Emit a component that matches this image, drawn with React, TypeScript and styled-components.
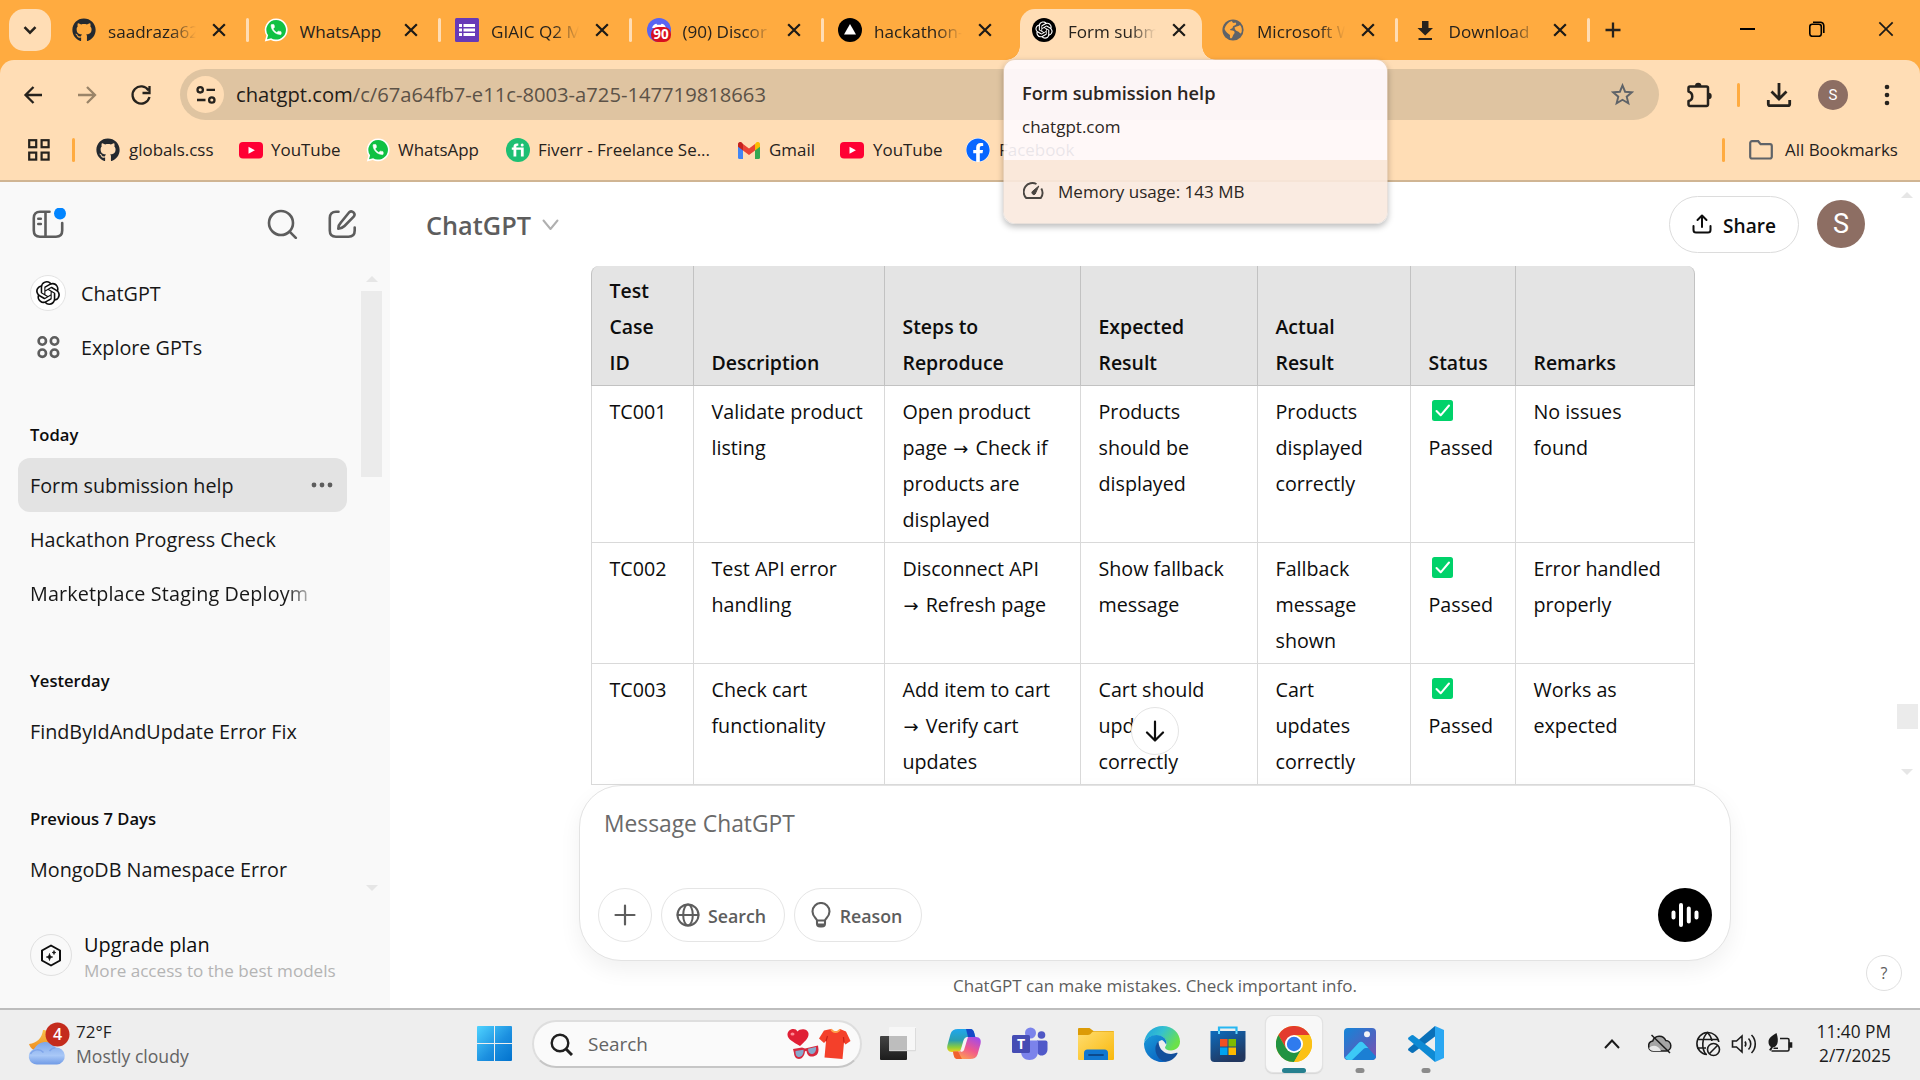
import React from 'react';
import styled, { createGlobalStyle, css } from 'styled-components';
import { FaGithub, FaFacebook } from 'react-icons/fa';

const Global = createGlobalStyle`
  * { box-sizing: border-box; }
  html, body { margin: 0; padding: 0; overflow: hidden; background: #fff; }
  body { font-family: "Open Sans", "Noto Sans", sans-serif; color: #0d0d0d; }
  svg { display: block; flex: none; }
`;

const Screen = styled.div`
  width: 1920px;
  height: 1080px;
  display: flex;
  flex-direction: column;
  position: relative;
  overflow: hidden;
`;

/* ---------- tab strip ---------- */
const TabStrip = styled.div`
  height: 60px;
  flex: none;
  display: flex;
  align-items: flex-start;
  background: #ffab40;
  padding: 9px 0 0 9px;
`;
const TabSearch = styled.div`
  width: 42px;
  height: 42px;
  border-radius: 15px;
  background: #ffddb5;
  display: flex;
  align-items: center;
  justify-content: center;
  margin-right: 9px;
`;
const TabBox = styled.div<{ $active?: boolean }>`
  width: 191.5px;
  height: 51px;
  padding-left: 12px;
  padding-bottom: 9px;
  display: flex;
  align-items: center;
  position: relative;
  ${p => p.$active && css`
    width: 182px;
    margin: 0 7px 0 2.5px;
    border-radius: 15px 15px 0 0;
    background: #ffddb5;
    &::before, &::after {
      content: "";
      position: absolute;
      bottom: 0;
      width: 14px;
      height: 14px;
    }
    &::before { left: -14px; background: radial-gradient(circle at 0 0, transparent 13.5px, #ffddb5 14px); }
    &::after { right: -14px; background: radial-gradient(circle at 100% 0, transparent 13.5px, #ffddb5 14px); }
  `}
`;
const TabTitle = styled.span<{ $full?: boolean }>`
  width: 88px;
  margin: 3px 11px 0 12px;
  font-size: 17.1px;
  line-height: 24px;
  white-space: nowrap;
  overflow: hidden;
  color: #26221d;
  ${p => !p.$full && css`
    -webkit-mask-image: linear-gradient(90deg, #000 62px, transparent 88px);
    mask-image: linear-gradient(90deg, #000 62px, transparent 88px);
  `}
`;
const CloseSlot = styled.div`
  width: 24px;
  display: flex;
  justify-content: center;
`;
const TabSeparator = styled.div`
  width: 3px;
  height: 24px;
  border-radius: 2px;
  margin-left: 15px;
  background: #ffddb5;
`;
const NewTab = styled.div`
  width: 24px;
  height: 42px;
  margin-left: 9px;
  display: flex;
  align-items: center;
  justify-content: center;
`;
const WindowControls = styled.div`
  margin-left: auto;
  display: flex;
  height: 40px;
`;
const WindowButton = styled.div`
  width: 69px;
  display: flex;
  align-items: center;
  justify-content: center;
`;

/* ---------- toolbar ---------- */
const Chrome = styled.div`
  height: 122px;
  flex: none;
  background: linear-gradient(#ffab40, #ffab40) top / 100% 16px no-repeat;
`;
const ChromeInner = styled.div`
  height: 122px;
  background: #ffddb5;
  border-radius: 14px 14px 0 0;
  border-bottom: 2px solid #d0b593;
`;
const Toolbar = styled.div`
  height: 60px;
  padding: 9px 0 0 19px;
  display: flex;
  align-items: flex-start;
`;
const NavButton = styled.div<{ $w: number; $center?: boolean; $ml?: number }>`
  width: ${p => p.$w}px;
  height: 51px;
  margin-left: ${p => p.$ml ?? 0}px;
  display: flex;
  align-items: center;
  justify-content: ${p => (p.$center ? 'center' : 'flex-start')};
`;
const Omnibox = styled.div`
  width: 1479px;
  height: 51px;
  border-radius: 26px;
  background: #dfc4a1;
  display: flex;
  align-items: center;
  padding: 0 25px 0 7px;
`;
const SiteInfo = styled.div`
  width: 37px;
  height: 37px;
  border-radius: 50%;
  background: #ffddb5;
  display: flex;
  align-items: center;
  justify-content: center;
`;
const Url = styled.div`
  margin: 0 auto 1px 12px;
  font-size: 20.2px;
  color: #5c5247;
  white-space: nowrap;
  b { font-weight: 400; color: #1f1c18; }
`;
const Avatar = styled.div<{ $size: number; $font: number }>`
  width: ${p => p.$size}px;
  height: ${p => p.$size}px;
  border-radius: 50%;
  background: #8d6e63;
  color: #fff;
  font-family: Roboto, sans-serif;
  font-size: ${p => p.$font}px;
  display: flex;
  align-items: center;
  justify-content: center;
  flex: none;
`;
const BarSlot = styled.div`
  height: 51px;
  display: flex;
  align-items: center;
`;
const OrangeBar = styled.div`
  width: 3px;
  height: 24px;
  border-radius: 2px;
  background: #ffab40;
  flex: none;
`;
const BookmarkBar = styled.div`
  height: 60px;
  display: flex;
  align-items: center;
  padding: 0 22px 0 28px;
`;
const BookmarkGroup = styled.div<{ $right?: boolean }>`
  display: flex;
  margin-left: ${p => (p.$right ? '24px' : '21px')};
  margin-right: ${p => (p.$right ? '0' : 'auto')};
`;
const Bookmark = styled.div<{ $w: number; $gap?: number }>`
  width: ${p => p.$w}px;
  display: flex;
  align-items: center;
  gap: ${p => p.$gap ?? 9}px;
  font-size: 16.95px;
  white-space: nowrap;
  color: #26221d;
  > label { padding-bottom: 1px; }
`;
const BlueF = styled.span`
  width: 24px;
  height: 24px;
  border-radius: 50%;
  background: #fff;
`;

/* ---------- tab hover card ---------- */
const HoverCard = styled.div`
  position: absolute;
  left: 1003px;
  top: 59px;
  width: 385px;
  height: 165px;
  border-radius: 12px;
  overflow: hidden;
  border: 1px solid rgba(214, 196, 186, 0.55);
  box-shadow: 0 3px 6px rgba(0, 0, 0, 0.26);
  font-size: 17.05px;
  color: #2b2622;
`;
const CardTop = styled.div`
  height: 100px;
  padding: 16px 18px 0;
  background: rgba(255, 251, 255, 0.9);
  line-height: 34px;
`;
const CardTitle = styled.div`
  font-size: 18.2px;
  font-weight: 600;
`;
const CardBottom = styled.div`
  height: 64px;
  padding: 0 19px 2px;
  background: rgba(249, 233, 222, 0.9);
  display: flex;
  align-items: center;
  gap: 14px;
`;

/* ---------- page ---------- */
const Page = styled.div`
  flex: 1;
  display: flex;
  min-height: 0;
`;
const Sidebar = styled.aside`
  width: 390px;
  background: #f9f9f9;
  display: flex;
  flex-direction: column;
`;
const SidebarTop = styled.div`
  height: 84px;
  flex: none;
  padding: 26px 33px 0 30px;
  display: flex;
  gap: 29px;
  > :first-child { margin-right: auto; }
`;
const SidebarScroll = styled.div`
  height: 631px;
  flex: none;
  display: flex;
`;
const SidebarList = styled.div`
  width: 361px;
  padding-left: 18px;
  display: flex;
  flex-direction: column;
`;
const SideRow = styled.div<{ $active?: boolean }>`
  width: 329px;
  height: 54px;
  flex: none;
  border-radius: 12px;
  padding: 0 14px 0 12px;
  display: flex;
  align-items: center;
  background: ${p => (p.$active ? '#e3e3e3' : 'transparent')};
  font-size: 19.75px;
  white-space: nowrap;
  color: #171717;
`;
const SideText = styled.span<{ $fade?: boolean }>`
  padding-top: 1px;
  margin-right: auto;
  ${p => p.$fade && css`
    letter-spacing: 0.15px;
    -webkit-mask-image: linear-gradient(90deg, #000 256px, transparent 288px);
    mask-image: linear-gradient(90deg, #000 256px, transparent 288px);
  `}
`;
const SideIcon = styled.div<{ $ring?: boolean }>`
  width: 36px;
  height: 36px;
  margin-right: 15px;
  border-radius: 50%;
  border: ${p => (p.$ring ? '1px solid #e3e3e3' : '1px solid transparent')};
  background: ${p => (p.$ring ? '#fff' : 'transparent')};
  display: flex;
  align-items: center;
  justify-content: center;
`;
const GroupLabel = styled.div`
  height: 84px;
  flex: none;
  padding: 47px 12px 0;
  font-size: 16.6px;
  font-weight: 600;
  line-height: 28px;
  color: #0d0d0d;
`;
const ScrollTrack = styled.div<{ $w: number }>`
  width: ${p => p.$w}px;
  display: flex;
  flex-direction: column;
  align-items: center;
`;
const Arrow = styled.div<{ $down?: boolean; $top: number }>`
  margin-top: ${p => p.$top}px;
  border: 6px solid transparent;
  border-top: ${p => (p.$down ? '6px solid #e6e6e6' : '0')};
  border-bottom: ${p => (p.$down ? '0' : '6px solid #e6e6e6')};
`;
const Thumb = styled.div<{ $h: number; $top: number }>`
  width: 21px;
  height: ${p => p.$h}px;
  margin-top: ${p => p.$top}px;
  background: #ebebeb;
`;
const Upgrade = styled.div`
  display: flex;
  padding: 36px 0 0 30px;
`;
const UpgradeIcon = styled.div`
  width: 42px;
  height: 42px;
  border-radius: 50%;
  border: 1px solid #e0e0e0;
  margin: 1px 12px 0 0;
  display: flex;
  align-items: center;
  justify-content: center;
`;
const UpgradeText = styled.div`
  font-size: 19.9px;
  line-height: 26px;
  margin-top: -1px;
  small { display: block; font-size: 17.1px; color: #b4b4b4; }
`;

const Main = styled.main`
  width: 1506px;
  display: flex;
  flex-direction: column;
`;
const MainHeader = styled.header`
  height: 84px;
  flex: none;
  display: flex;
  align-items: center;
  padding: 0 31px 0 36px;
`;
const ModelName = styled.div`
  margin-right: auto;
  padding-top: 2px;
  display: flex;
  align-items: center;
  gap: 11px;
  font-size: 25.3px;
  font-weight: 600;
  color: #5d5d5d;
`;
const ShareButton = styled.div`
  width: 130px;
  height: 57px;
  border: 1px solid #dcdcdc;
  border-radius: 29px;
  display: flex;
  align-items: center;
  justify-content: center;
  gap: 11px;
  font-size: 19.1px;
  font-weight: 600;
  margin-right: 18px;
  span { padding-top: 3px; }
`;
const TableArea = styled.div`
  height: 519px;
  flex: none;
  padding-left: 201px;
  overflow: hidden;
  position: relative;
`;
const Table = styled.table`
  width: 1104px;
  table-layout: fixed;
  border-collapse: separate;
  border-spacing: 0;
  font-size: 19.7px;
  line-height: 36px;
  color: #0d0d0d;
  th, td {
    text-align: left;
    padding: 8px 4px 4px 17.5px;
    border-left: 1px solid #d9d9d9;
    border-bottom: 1px solid #d9d9d9;
    white-space: pre;
  }
  th {
    vertical-align: bottom;
    font-weight: 600;
    font-size: 19.45px;
    padding-top: 7px;
    background: #e4e4e4;
    border-color: #c2c2c2;
  }
  td { vertical-align: top; }
  th:last-child { border-right: 1px solid #c2c2c2; border-top-right-radius: 8px; }
  th:first-child { border-top-left-radius: 8px; }
  td:last-child { border-right: 1px solid #d9d9d9; }
`;
const Col = styled.col<{ $w: number }>`
  width: ${p => p.$w}px;
`;
const CheckEmoji = styled.span`
  width: 28px;
  height: 36px;
  padding-bottom: 3px;
  display: flex;
  align-items: center;
  justify-content: center;
`;
const LongArrow = styled.span`
  line-height: 20px;
  font-family: "DejaVu Sans", sans-serif;
  font-size: 18px;
  padding: 0 2px 0 1px;
`;
const ScrollDown = styled.div`
  position: absolute;
  left: 741px;
  top: 441px;
  width: 48px;
  height: 48px;
  border-radius: 50%;
  background: #fff;
  border: 1px solid #e4e4e4;
  display: flex;
  align-items: center;
  justify-content: center;
`;
const Composer = styled.div`
  width: 1152px;
  height: 176px;
  flex: none;
  margin-left: 189px;
  border: 1px solid #e3e3e3;
  border-radius: 42px;
  background: #fff;
  box-shadow: 0 9px 22px rgba(0, 0, 0, 0.06);
  padding: 20px 18px 18px;
  display: flex;
  flex-direction: column;
  justify-content: space-between;
`;
const Placeholder = styled.div`
  padding-left: 6px;
  font-size: 22.8px;
  line-height: 36px;
  color: #6a6a6a;
`;
const ComposerRow = styled.div`
  display: flex;
  gap: 9px;
  > :last-child { margin-left: auto; }
`;
const Pill = styled.div<{ $w: number }>`
  width: ${p => p.$w}px;
  height: 54px;
  border: 1px solid #e5e5e5;
  border-radius: 27px;
  display: flex;
  align-items: center;
  justify-content: center;
  gap: 8px;
  font-size: 17.8px;
  font-weight: 600;
  color: #5d5d5d;
  span { padding: 1px 4px 0 0; }
`;
const VoiceButton = styled.div`
  width: 54px;
  height: 54px;
  border-radius: 50%;
  background: #000;
  display: flex;
  align-items: center;
  justify-content: center;
`;
const Disclaimer = styled.div`
  width: 1152px;
  margin-left: 189px;
  line-height: 46px;
  padding-top: 2px;
  text-align: center;
  font-size: 17px;
  color: #5d5d5d;
  white-space: nowrap;
`;
const Help = styled.div`
  position: absolute;
  left: 1866px;
  top: 955px;
  width: 36px;
  height: 36px;
  border-radius: 50%;
  border: 1px solid #e0e0e0;
  font-size: 16px;
  color: #5d5d5d;
  display: flex;
  align-items: center;
  justify-content: center;
`;

/* ---------- taskbar ---------- */
const Taskbar = styled.footer`
  height: 72px;
  flex: none;
  background: #eee;
  border-top: 2px solid #bdbdbd;
  display: flex;
  align-items: center;
  padding: 0 30px 2px 26px;
`;
const Weather = styled.div`
  width: 451px;
  display: flex;
  align-items: center;
  font-size: 17px;
  line-height: 24px;
  color: #1f1f1f;
  div { margin: 0 0 0 2px; }
  small { display: block; font-size: 17.6px; color: #636363; }
`;
const SearchBox = styled.div`
  width: 330px;
  height: 48px;
  margin: 0 3px 0 19px;
  border-radius: 24px;
  border: 2px solid #dedede;
  border-bottom-color: #c6c6c6;
  background: #fafafa;
  display: flex;
  align-items: center;
  padding: 0 9px 0 16px;
  font-size: 18.95px;
  color: #636363;
  span { margin: 0 auto 0 15px; }
`;
const AppSlot = styled.div<{ $active?: boolean }>`
  width: ${p => (p.$active ? 56 : 66)}px;
  margin: 0 ${p => (p.$active ? 5 : 0)}px;
  height: 56px;
  border-radius: 7px;
  display: flex;
  flex-direction: column;
  align-items: center;
  justify-content: center;
  position: relative;
  ${p => p.$active && css`background: #f8f8f8; box-shadow: 0 0 0 1px #e3e3e3, 0 1px 1px 1px #d6d6d6;`}
`;
const Indicator = styled.div<{ $wide?: boolean }>`
  position: absolute;
  bottom: -1px;
  left: 50%;
  transform: translateX(-50%);
  width: ${p => (p.$wide ? 24 : 9)}px;
  height: 5px;
  border-radius: 3px;
  background: ${p => (p.$wide ? '#26808f' : '#8b8b8b')};
`;
const Tray = styled.div`
  margin-left: auto;
  display: flex;
  align-items: center;
`;
const TraySlot = styled.div<{ $w: number; $ml?: number }>`
  width: ${p => p.$w}px;
  margin-left: ${p => p.$ml ?? 0}px;
  display: flex;
  justify-content: center;
`;
const Clock = styled.div`
  width: 93px;
  margin-right: -1px;
  text-align: right;
  font-size: 17.3px;
  line-height: 24px;
  color: #1b1b1b;
  white-space: nowrap;
`;

/* ---------- icons ---------- */
const OPENAI = 'M22.2819 9.8211a5.9847 5.9847 0 0 0-.5157-4.9108 6.0462 6.0462 0 0 0-6.5098-2.9A6.0651 6.0651 0 0 0 4.9807 4.1818a5.9847 5.9847 0 0 0-3.9977 2.9 6.0462 6.0462 0 0 0 .7427 7.0966 5.98 5.98 0 0 0 .511 4.9107 6.051 6.051 0 0 0 6.5146 2.9001A5.9847 5.9847 0 0 0 13.2599 24a6.0557 6.0557 0 0 0 5.7718-4.2058 5.9894 5.9894 0 0 0 3.9977-2.9001 6.0557 6.0557 0 0 0-.7475-7.0729zm-9.022 12.6081a4.4755 4.4755 0 0 1-2.8764-1.0408l.1419-.0804 4.7783-2.7582a.7948.7948 0 0 0 .3927-.6813v-6.7369l2.02 1.1686a.071.071 0 0 1 .038.052v5.5826a4.504 4.504 0 0 1-4.4945 4.4944zm-9.6607-4.1254a4.4708 4.4708 0 0 1-.5346-3.0137l.142.0852 4.783 2.7582a.7712.7712 0 0 0 .7806 0l5.8428-3.3685v2.3324a.0804.0804 0 0 1-.0332.0615L9.74 19.9502a4.4992 4.4992 0 0 1-6.1408-1.6464zM2.3408 7.8956a4.485 4.485 0 0 1 2.3655-1.9728V11.6a.7664.7664 0 0 0 .3879.6765l5.8144 3.3543-2.0201 1.1685a.0757.0757 0 0 1-.071 0l-4.8303-2.7865A4.504 4.504 0 0 1 2.3408 7.872zm16.5963 3.8558L13.1038 8.364 15.1192 7.2a.0757.0757 0 0 1 .071 0l4.8303 2.7913a4.4944 4.4944 0 0 1-.6765 8.1042v-5.6772a.79.79 0 0 0-.407-.667zm2.0107-3.0231l-.142-.0852-4.7735-2.7818a.7759.7759 0 0 0-.7854 0L9.409 9.2297V6.8974a.0662.0662 0 0 1 .0284-.0615l4.8303-2.7866a4.4992 4.4992 0 0 1 6.6802 4.66zM8.3065 12.863l-2.02-1.1638a.0804.0804 0 0 1-.038-.0567V6.0742a4.4992 4.4992 0 0 1 7.3757-3.4537l-.142.0805L8.704 5.459a.7948.7948 0 0 0-.3927.6813zm1.0976-2.3654l2.602-1.4998 2.6069 1.4998v2.9994l-2.5974 1.4997-2.6067-1.4997Z';

const WhatsAppIcon = () => (
  <svg width="24" height="24" viewBox="0 0 24 24">
    <path d="M12.2 0.4A11.4 11.4 0 1 1 6.9 21.9L0.8 23.6 2.4 17.6A11.4 11.4 0 0 1 12.2 0.4Z" fill="#fff" />
    <path d="M12.2 2A9.8 9.8 0 1 1 7.1 20.2L3 21.3 4.1 17.3A9.8 9.8 0 0 1 12.2 2Z" fill="#10c143" />
    <path transform="translate(5.4 4.8) scale(.56)" d="M6.62 10.79c1.44 2.83 3.76 5.14 6.59 6.59l2.2-2.2c.27-.27.67-.36 1.02-.24 1.12.37 2.33.57 3.57.57.55 0 1 .45 1 1V20c0 .55-.45 1-1 1-9.39 0-17-7.61-17-17 0-.55.45-1 1-1h3.5c.55 0 1 .45 1 1 0 1.25.2 2.45.57 3.57.11.35.03.74-.25 1.02l-2.2 2.2z" fill="#fff" stroke="#fff" strokeWidth="1" />
  </svg>
);
const FormsIcon = () => (
  <svg width="24" height="24" viewBox="0 0 24 24">
    <rect width="24" height="24" rx="1.5" fill="#673ab7" />
    <g fill="#fff">
      <rect x="4" y="6" width="3" height="3" /><rect x="4" y="10.5" width="3" height="3" /><rect x="4" y="15" width="3" height="3" />
      <rect x="8.5" y="6" width="11.5" height="3" /><rect x="8.5" y="10.5" width="11.5" height="3" /><rect x="8.5" y="15" width="11.5" height="3" />
    </g>
  </svg>
);
const DiscordIcon = () => (
  <svg width="24" height="24" viewBox="0 0 24 24">
    <circle cx="12" cy="12" r="12" fill="#5865f2" />
    <path d="M5 10c1-3 3-4 4.500-4.200l.7 1h3.600l.7-1C16.500 6 18 7 19 10z" fill="#fff" />
    <rect x="4" y="9" width="20" height="15" rx="7" fill="#d8101f" />
    <text x="14" y="21.200" textAnchor="middle" fontFamily="Open Sans, sans-serif" fontWeight="700" fontSize="13.500" fill="#fff">90</text>
  </svg>
);
const VercelIcon = () => (
  <svg width="24" height="24" viewBox="0 0 24 24"><circle cx="12" cy="12" r="12" fill="#000" /><path d="M12 6l6 10.500H6z" fill="#fff" /></svg>
);
const GptTabIcon = () => (
  <svg width="24" height="24" viewBox="0 0 24 24"><circle cx="12" cy="12" r="12" fill="#000" /><path transform="translate(3.400 3.400) scale(.72)" d={OPENAI} fill="#fff" /></svg>
);
const GlobeIcon = () => (
  <svg width="24" height="24" viewBox="0 0 24 24">
    <circle cx="12" cy="12" r="10.600" fill="#5f6368" />
    <path d="M3.500 11c1-4 3.500-7 7.500-8 .5 2.500 2 2 3.500 1.500 1.500 1 .5 2.500-1 3-2 .5-1.500 1.500-2 2.500s-2.500.5-2.500 2c1.500.8 4 0 4.500 2 .5 1.500-1 2-1.500 3.500s-1 2.500-2 3c-1.500-.5-1-2.500-1-3.500-1.500-1-4.500-3-5.500-6z" fill="#ffab40" />
    <path d="M13.500 9.500c1.500-1.500 4.500-1 5.500-2.500 2 2 2.500 6 1 8.500-1.500 0-1.500-1.500-3-2s-3-1-3.500-4z" fill="#ffab40" />
  </svg>
);
const DownloadTabIcon = () => (
  <svg width="24" height="24" viewBox="0 0 24 24"><path d="M9 3h6.500v7h4.500l-7.800 7.500L4.500 10H9zM5.500 20h13.500v2H5.500z" fill="#26221d" /></svg>
);
const Cross = ({ s = 12, w = 2.2 }: { s?: number; w?: number }) => (
  <svg width={s} height={s} viewBox="0 0 12 12"><path d="M1 1l10 10M11 1L1 11" stroke="#1c1a17" strokeWidth={w * 12 / s} fill="none" /></svg>
);
const YouTubeIcon = () => (
  <svg width="24" height="24" viewBox="0 0 24 24"><rect y="4" width="24" height="16.500" rx="4" fill="#ff0033" /><path d="M9.500 8.700l6.400 3.500-6.400 3.500z" fill="#fff" /></svg>
);
const FiverrIcon = () => (
  <svg width="24" height="24" viewBox="0 0 24 24">
    <circle cx="12" cy="12" r="12" fill="#1dbf73" />
    <path d="M7.500 18.500v-6.800H5.800V9.500h1.700V8.700C7.500 6.700 8.800 5.500 10.800 5.500h1.500v2.300h-1c-.7 0-1 .3-1 .9v.8h7.400v9h-2.800v-6.800h-4.600v6.800z" fill="#fff" />
    <circle cx="16.200" cy="6.900" r="1.500" fill="#fff" />
  </svg>
);
const GmailIcon = () => (
  <svg width="22" height="17" viewBox="0 0 22 17">
    <path d="M0 3v12.500A1.500 1.500 0 0 0 1.500 17H5V6.500z" fill="#4285f4" /><path d="M22 3v12.500a1.500 1.500 0 0 1-1.500 1.500H17V6.500z" fill="#34a853" />
    <path d="M17 2v6.500l5-3.800V2.200C22 .2 19.700-.7 18.200.5z" fill="#fbbc04" /><path d="M5 8.500V2l6 4.500L17 2v6.500L11 13z" fill="#ea4335" /><path d="M0 2.200v2.500l5 3.800V2L3.800.5C2.300-.7 0 .2 0 2.200z" fill="#c5221f" />
  </svg>
);
const AppsIcon = () => (
  <svg width="22" height="22" viewBox="0 0 22 22" fill="none" stroke="#26221d" strokeWidth="2.200">
    <rect x="1.200" y="1.200" width="7" height="7" /><rect x="13.600" y="1.200" width="7" height="7" /><rect x="1.200" y="13.600" width="7" height="7" /><rect x="13.600" y="13.600" width="7" height="7" />
  </svg>
);
const FolderIcon = () => (
  <svg width="24" height="20" viewBox="0 0 24 20"><path d="M1.200 16.500V3A1.800 1.800 0 0 1 3 1.200h6.200l2.400 3H21A1.800 1.800 0 0 1 22.800 6v10.700A1.800 1.800 0 0 1 21 18.500H3a1.800 1.800 0 0 1-1.800-2z" fill="none" stroke="#5f6368" strokeWidth="2.200" /></svg>
);
const GaugeIcon = () => (
  <svg width="21" height="18" viewBox="0 0 21 18" fill="none" stroke="#4a4642" strokeWidth="1.900"><path d="M13.500 2A8.800 8.800 0 0 0 3.200 16h14.600A8.800 8.800 0 0 0 18.300 6.500" /><path d="M15.800 4L9.500 9.300a1.900 1.900 0 1 0 2.700 2.700z" fill="#4a4642" strokeWidth="1" /></svg>
);
const UpgradeLogo = () => (
  <svg width="24" height="27" viewBox="0 0 24 27" fill="none" stroke="#0d0d0d" strokeWidth="2" strokeLinejoin="round">
    <path d="M12 3.500l9 5v10l-9 5-9-5v-10z" />
    <path d="M10.500 11.500c.4 2.500 1 3 3.200 3.500-2.200.6-2.800 1.200-3.200 3.500-.4-2.300-1-2.900-3.200-3.500 2.200-.5 2.800-1 3.200-3.500zM15 8.500c.3 1.400.6 1.700 1.900 2-1.300.3-1.600.7-1.900 2-.3-1.300-.6-1.700-1.900-2 1.300-.3 1.600-.6 1.900-2z" fill="#0d0d0d" strokeWidth=".7" />
  </svg>
);
const CheckMark = () => (
  <svg width="21" height="21" viewBox="0 0 21 21"><rect width="21" height="21" rx="2.500" fill="#00d26a" /><path d="M4.500 11l4.200 4.300L17 5.500" fill="none" stroke="#fff" strokeWidth="2" strokeLinecap="round" strokeLinejoin="round" /></svg>
);
const WeatherIcon = () => (
  <svg width="48" height="48" viewBox="0 0 48 48">
    <defs>
      <linearGradient id="moon" x1="0" y1="0" x2="0" y2="1"><stop offset="0" stopColor="#f8c04a" /><stop offset="1" stopColor="#ee8a1d" /></linearGradient>
      <linearGradient id="cloud" x1="0" y1="0" x2="0" y2="1"><stop offset="0" stopColor="#7ea6ea" /><stop offset=".6" stopColor="#a9c8f7" /><stop offset="1" stopColor="#6f9ae6" /></linearGradient>
    </defs>
    <path d="M17 10c-1 8-6 13-14 14 2 6 8 9 14 7s10-8 8-14-5-7-8-7z" fill="url(#moon)" />
    <path d="M11 44.500a8 8 0 0 1-3-15.500A12.500 12.500 0 0 1 29.500 27.500 8.500 8.500 0 0 1 31 44.500z" fill="url(#cloud)" />
    <path d="M4.500 34a8 8 0 0 1 13-1.500M23.500 31a9 9 0 0 1 6-3.500" stroke="#7fa5ea" strokeWidth="1.500" fill="none" />
    <circle cx="31.500" cy="14.500" r="12" fill="#c42b1c" />
    <text x="31.500" y="20.200" textAnchor="middle" fontFamily="Open Sans, sans-serif" fontSize="16" fontWeight="600" fill="#fff">4</text>
  </svg>
);
const WindowsIcon = () => (
  <svg width="36" height="36" viewBox="0 0 36 36">
    <defs><linearGradient id="win" gradientUnits="userSpaceOnUse" x1="0" y1="0" x2="36" y2="36"><stop offset="0" stopColor="#4fd3ff" /><stop offset=".55" stopColor="#1c90e0" /><stop offset="1" stopColor="#0070cc" /></linearGradient></defs>
    <path d="M0 1a1 1 0 0 1 1-1h16v17H0zM18 0h16a1 1 0 0 1 1 1v16H18zM0 18h17v17H1a1 1 0 0 1-1-1zM18 18h17v16a1 1 0 0 1-1 1H18z" fill="url(#win)" />
  </svg>
);
const ShoppingArt = () => (
  <svg width="64" height="32" viewBox="0 0 64 32">
    <path d="M13 18C6 14 0 11 .5 6s8-7 10-2.500C13 0 21 .5 21.500 5.500S17 14 13 18z" fill="#e01f35" /><ellipse cx="5.500" cy="6" rx="2" ry="1.500" fill="#ff8a95" />
    <path d="M6 21l9-1.500 3 1 13-3 .5 4c0 5-3 7-6.500 7s-5-2-5.500-5.500l-1.500.3C17.500 28 15 31 12 31s-5-3-5-6z" fill="#d6293f" />
    <path d="M8.500 23l8-1.200c.5 4-1.500 7-4.200 7.200S8.300 27 8.500 23zM21 20.800l8-1.800c.4 4-1 6.500-3.800 7S21 24 21 20.800z" fill="#87a9cc" />
    <path d="M37 2.500L44 1c2 3 7 3 9 0l6 2.500 4.500 9.500-5 3.500-1.500-2-1.500 16.500-18-1.500L39 13l-2 2-5-4.500z" fill="#f4402a" /><path d="M44 1.200c2 3.800 7 3.800 9 .2" stroke="#ffa04a" strokeWidth="1.800" fill="none" /><path d="M39 13l1.500-5M57 14.500l-.5-5.500" stroke="#c81f17" strokeWidth="1.200" />
  </svg>
);
const TaskViewIcon = () => (
  <svg width="36" height="36" viewBox="0 0 36 36">
    <defs><linearGradient id="tv" x1="0" y1="0" x2="0" y2="1"><stop offset="0" stopColor="#444" /><stop offset="1" stopColor="#1c1c1c" /></linearGradient></defs>
    <rect x="0" y="10" width="27" height="24" rx="1" fill="url(#tv)" /><rect x="9" y="1" width="27" height="24" rx="1" fill="#f7f7f7" /><path d="M9 10h18v15H9z" fill="#bdbdbd" />
    <path d="M9.500 24.700h26.200V2" stroke="#d5d5d5" fill="none" />
  </svg>
);
const CopilotIcon = () => (
  <svg width="36" height="36" viewBox="0 0 36 36">
    <defs>
      <linearGradient id="co1" x1="0" y1="0" x2="0" y2="1"><stop offset="0" stopColor="#1fa7ee" /><stop offset=".5" stopColor="#2b9fb0" /><stop offset=".8" stopColor="#8fce3a" /><stop offset="1" stopColor="#f2d21c" /></linearGradient>
      <linearGradient id="co2" x1=".8" y1="0" x2=".2" y2="1"><stop offset="0" stopColor="#a34bea" /><stop offset=".5" stopColor="#f0588c" /><stop offset="1" stopColor="#ffa84c" /></linearGradient>
    </defs>
    <path d="M12 3h12c3 0 4 2 4.500 5l.8 3H22c-3 0-4 1.500-5 5l-2 7c-.6 2-2 3-4 3H6c-4 0-5.500-3-4.500-7l3-11C5.500 4.500 8 3 12 3z" fill="url(#co1)" />
    <path d="M20 3h4c3 0 4 2 4.500 5l.8 3H22z" fill="#1548c8" />
    <path d="M24 33H12c-3 0-4-2-4.500-5L7 25.500h5c3 0 4-1.500 5-5l2-6.500c.7-2 2-3 4-3h7c4 0 5.500 3 4.500 7l-3 10.500C30.500 31.500 28 33 24 33z" fill="url(#co2)" />
    <path d="M16 33h-4c-3 0-4-2-4.500-5L7 25.500h5z" fill="#f0622f" />
    <path d="M18.500 13.500c.8-1.600 2-2.300 3.500-2.400l-4 13c-.8 1.400-2 1.900-3.500 2z" fill="#f6f3f5" />
  </svg>
);
const TeamsIcon = () => (
  <svg width="36" height="34" viewBox="0 0 36 34">
    <circle cx="29.500" cy="8" r="3.800" fill="#4f57c4" /><circle cx="18.500" cy="6" r="5.500" fill="#7b83eb" />
    <path d="M25 13.500h8.500a2 2 0 0 1 2 2V22c0 4-2.500 6.500-6 6.500S25 26 25 22z" fill="#5059c9" /><path d="M9 13.500h17v11c0 5-3.500 8.500-8.500 8.500S9 29.500 9 24.500z" fill="#7b83eb" />
    <rect y="8" width="18" height="18" rx="1.600" fill="#454cb4" />
    <text x="9" y="22" textAnchor="middle" fontFamily="Open Sans, sans-serif" fontSize="14" fontWeight="700" fill="#fff">T</text>
  </svg>
);
const ExplorerIcon = () => (
  <svg width="36" height="34" viewBox="0 0 36 34">
    <defs><linearGradient id="fo" x1="0" y1="0" x2="1" y2="1"><stop offset="0" stopColor="#ffdd70" /><stop offset="1" stopColor="#f9b80c" /></linearGradient></defs>
    <path d="M0 2a1 1 0 0 1 1-1h10.500l4 3H35a1 1 0 0 1 1 1v8H0z" fill="#dc9b06" /><path d="M0 8h10c3 0 3.500-3.500 6-3.500h20V32a1 1 0 0 1-1 1H1a1 1 0 0 1-1-1z" fill="url(#fo)" />
    <path d="M6 33v-7a3.500 3.500 0 0 1 3.500-3.500h17A3.500 3.500 0 0 1 30 26v7z" fill="#1177cf" /><path d="M11 28h14" stroke="#0c4a8c" strokeWidth="1.800" strokeLinecap="round" />
  </svg>
);
const EdgeIcon = () => (
  <svg width="36" height="36" viewBox="0 0 36 36">
    <defs>
      <linearGradient id="e1" x1="0" y1="0" x2="1" y2=".5"><stop offset="0" stopColor="#1b9de2" /><stop offset=".5" stopColor="#35c1cf" /><stop offset="1" stopColor="#6be14a" /></linearGradient>
      <linearGradient id="e2" x1="0" y1="0" x2=".6" y2="1"><stop offset="0" stopColor="#1a9bd9" /><stop offset="1" stopColor="#0a66c2" /></linearGradient>
    </defs>
    <path d="M0 17C1 7 9 0 18.500 0 29 0 36 7.500 36 15.500c0 5.500-4 9-9 9-4 0-6-1.500-6-3 0-1 1.500-1.800 1.500-4.500 0-4-4-7.500-9.500-7.500C6 9.500 1.500 13 0 17z" fill="url(#e1)" />
    <path d="M0 17.500C1.500 13 6 9 12.500 9c6 0 10 3.800 10 8l-.5 1.500C21 16 19.500 15 18 14c-5 1-6.500 6-5 11 1.500 4.500 5 8.500 10 10.300A18 18 0 0 1 0 17.500z" fill="url(#e2)" />
    <path d="M14.500 15.500c-5 3.500-4.500 17 6.500 20.200C27 35.500 31 32 33.500 27.500c.3-.7-.3-1-.9-.7C25 30 15 26.500 14.500 15.500z" fill="#124f9c" />
  </svg>
);
const StoreIcon = () => (
  <svg width="36" height="36" viewBox="0 0 36 36">
    <defs><linearGradient id="st" x1="0" y1="0" x2=".5" y2="1"><stop offset="0" stopColor="#0d6cbe" /><stop offset="1" stopColor="#22375f" /></linearGradient></defs>
    <path d="M9 8V1.500h17.500V8" stroke="#27b7f2" strokeWidth="2.200" fill="none" /><path d="M.5 5h35v27a4 4 0 0 1-4 4h-27a4 4 0 0 1-4-4z" fill="url(#st)" /><path d="M9 5v3M26.500 5v3" stroke="#5fd6ff" strokeWidth="2" />
    <rect x="10" y="13" width="7.500" height="7.500" fill="#f25022" /><rect x="18.500" y="13" width="7.500" height="7.500" fill="#7fba00" /><rect x="10" y="21.500" width="7.500" height="7.500" fill="#00a4ef" /><rect x="18.500" y="21.500" width="7.500" height="7.500" fill="#ffb900" />
  </svg>
);
const ChromeIcon = () => (
  <svg width="36" height="36" viewBox="0 0 36 36">
    <circle cx="18" cy="18" r="18" fill="#fbc116" />
    <path d="M18 9h15.600A18 18 0 0 0 2.400 9L10.200 22.500z" fill="#e33b2e" /><path d="M2.400 9A18 18 0 0 0 18 36L25.800 22.500 18 18 10.200 22.500z" fill="#229342" />
    <path d="M18 9h15.600A18 18 0 0 1 18 36l7.800-13.500z" fill="#fbc116" />
    <circle cx="18" cy="18" r="9" fill="#fff" /><circle cx="18" cy="18" r="7.200" fill="#2f7bee" />
  </svg>
);
const PhotosIcon = () => (
  <svg width="32" height="32" viewBox="0 0 32 32">
    <defs><linearGradient id="ph" x1="0" y1="0" x2="1" y2="1"><stop offset="0" stopColor="#1386d9" /><stop offset=".6" stopColor="#4f63c0" /><stop offset="1" stopColor="#8250b0" /></linearGradient></defs>
    <rect width="32" height="32" rx="4" fill="url(#ph)" />
    <path d="M1 29.500L14.500 15a3.500 3.500 0 0 1 5 0L32 28.500a4 4 0 0 1-4 3.500H4a4 4 0 0 1-3-2.500z" fill="#1b7fd4" />
    <path d="M1 29.500L14.500 15a3.500 3.500 0 0 1 5 0l5 5.300c-2-.6-4-.3-5.500 1.200L8 32H4a4 4 0 0 1-3-2.500z" fill="#3cc9f6" />
    <circle cx="23" cy="6.200" r="3" fill="#f4f4f6" />
  </svg>
);
const VscodeIcon = () => (
  <svg width="36" height="36" viewBox="0 0 36 36">
    <path d="M27 0v10.500L5 27l-1.500-.3L.5 24.500c-.6-.6-.6-1.300 0-1.900z" fill="#0a70b8" /><path d="M27 36V25.500L5 9l-1.500.3L.5 11.500c-.6.6-.6 1.300 0 1.900z" fill="#0e8ad4" /><path d="M27 0L36 4v28l-9 4z" fill="#2aa7f2" />
  </svg>
);

const dark = { fill: 'none', stroke: '#26221d', strokeWidth: 2.3 } as const;
const grey = { fill: 'none', stroke: '#5d5d5d', strokeWidth: 2.6, strokeLinecap: 'round', strokeLinejoin: 'round' } as const;
const tray = { fill: 'none', stroke: '#1b1b1b', strokeWidth: 1.6 } as const;

const PanelIcon = () => (
  <svg width="36" height="36" viewBox="0 0 36 36" {...grey}>
    <path d="M19.500 3.800H10C6 3.800 3.800 6 3.800 10v12.500c0 4 2.200 6.200 6.200 6.200h16c4 0 6.200-2.200 6.200-6.200V15M15.500 4v24.500M8.300 10.800h2.500M8.300 16h2.500" />
    <circle cx="30" cy="5.500" r="6" fill="#0285ff" stroke="none" />
  </svg>
);
const LensIcon = () => (
  <svg width="31" height="31" viewBox="0 0 31 31" {...grey}><circle cx="14" cy="15" r="12" /><path d="M22.600 23.600l6.200 6.200" /></svg>
);
const ComposeIcon = () => (
  <svg width="30" height="31" viewBox="0 0 30 31" {...grey}>
    <path d="M11.500 3.800H9C5 3.800 2.800 6 2.800 10v12.500c0 4 2.200 6.200 6.200 6.200h12.500c4 0 6.200-2.200 6.200-6.200v-3" />
    <path d="M22.200 4.200a3.200 3.200 0 0 1 4.500 4.500L17.500 18c-1.600 1.600-3.600 2.500-6.200 2.700.1-2.700 1-4.700 2.600-6.200z" />
  </svg>
);

/* ---------- data ---------- */
type TabInfo = { icon: React.ReactNode; title: string; active?: boolean; sep?: boolean; full?: boolean };
const tabs: TabInfo[] = [
  { icon: <FaGithub size={24} color="#24292f" />, title: 'saadraza62', sep: true },
  { icon: <WhatsAppIcon />, title: 'WhatsApp', sep: true, full: true },
  { icon: <FormsIcon />, title: 'GIAIC Q2 M', sep: true },
  { icon: <DiscordIcon />, title: '(90) Discor', sep: true },
  { icon: <VercelIcon />, title: 'hackathon-' },
  { icon: <GptTabIcon />, title: 'Form subm', active: true },
  { icon: <GlobeIcon />, title: 'Microsoft W', sep: true },
  { icon: <DownloadTabIcon />, title: 'Download', sep: true },
];
const bookmarks: { icon: React.ReactNode; label: string; w: number; gap?: number }[] = [
  { icon: <FaGithub size={24} color="#24292f" />, label: 'globals.css', w: 143 },
  { icon: <YouTubeIcon />, label: 'YouTube', w: 127, gap: 8 },
  { icon: <WhatsAppIcon />, label: 'WhatsApp', w: 140, gap: 8 },
  { icon: <FiverrIcon />, label: 'Fiverr - Freelance Se...', w: 232, gap: 8 },
  { icon: <GmailIcon />, label: 'Gmail', w: 102, gap: 9 },
  { icon: <YouTubeIcon />, label: 'YouTube', w: 126 },
  { icon: <BlueF><FaFacebook size={24} color="#0866ff" /></BlueF>, label: 'Facebook', w: 120 },
];
const columns = [102, 191, 196, 177, 153, 105, 180];
const headers = ['Test\nCase\nID', 'Description', 'Steps to\nReproduce', 'Expected\nResult', 'Actual\nResult', 'Status', 'Remarks'];
const rows = [
  ['TC001', 'Validate product\nlisting', 'Open product\npage → Check if\nproducts are\ndisplayed', 'Products\nshould be\ndisplayed', 'Products\ndisplayed\ncorrectly', 'Passed', 'No issues\nfound'],
  ['TC002', 'Test API error\nhandling', 'Disconnect API\n→ Refresh page', 'Show fallback\nmessage', 'Fallback\nmessage\nshown', 'Passed', 'Error handled\nproperly'],
  ['TC003', 'Check cart\nfunctionality', 'Add item to cart\n→ Verify cart\nupdates', 'Cart should\nupdate\ncorrectly', 'Cart\nupdates\ncorrectly', 'Passed', 'Works as\nexpected'],
];
const withArrow = (text: string) => {
  const [before, after] = text.split('→');
  return after === undefined ? text : <>{before}<LongArrow>→</LongArrow>{after}</>;
};

export default function App() {
  return (
    <Screen>
      <Global />
      <TabStrip>
        <TabSearch><svg width="14" height="9" viewBox="0 0 14 9"><path d="M1.500 1.200L7 6.700l5.500-5.500" {...dark} strokeWidth={2.5} /></svg></TabSearch>
        {tabs.map(t => (
          <TabBox key={t.title} $active={t.active}>
            {t.icon}
            <TabTitle $full={t.full}>{t.title}</TabTitle>
            <CloseSlot><Cross s={14} /></CloseSlot>
            {t.sep && <TabSeparator />}
          </TabBox>
        ))}
        <NewTab><svg width="16" height="16" viewBox="0 0 16 16"><path d="M8 .5v15M.5 8h15" {...dark} /></svg></NewTab>
        <WindowControls>
          <WindowButton><svg width="15" height="2"><rect width="15" height="2" /></svg></WindowButton>
          <WindowButton><svg width="16" height="16" viewBox="0 0 16 16" fill="none" stroke="#000" strokeWidth="1.600"><rect x=".8" y="3.300" width="11.500" height="12" rx="2.500" /><path d="M4 1.200h7.200a3.500 3.500 0 0 1 3.600 3.500V12" /></svg></WindowButton>
          <WindowButton><Cross s={16} w={1.7} /></WindowButton>
        </WindowControls>
      </TabStrip>

      <Chrome>
        <ChromeInner>
          <Toolbar>
            <NavButton $w={54}><svg width="24" height="24" viewBox="0 0 24 24"><path d="M23 12H7M14.500 4l-8 8 8 8" {...dark} /></svg></NavButton>
            <NavButton $w={56}><svg width="24" height="24" viewBox="0 0 24 24"><path d="M5 12h17M14 4l8 8-8 8" {...dark} stroke="#9a8468" /></svg></NavButton>
            <NavButton $w={51}><svg width="24" height="24" viewBox="0 0 24 24"><path d="M19.500 7.500A8.600 8.600 0 1 0 20.500 14M20.500 3v7h-7" {...dark} /></svg></NavButton>
            <Omnibox>
              <SiteInfo><svg width="20" height="20" viewBox="0 0 20 20" {...dark}><circle cx="4.200" cy="4.800" r="2.700" /><path d="M10.500 4.800H19M1 15h8.500" /><circle cx="15.800" cy="15" r="2.700" /></svg></SiteInfo>
              <Url><b>chatgpt.com</b>/c/67a64fb7-e11c-8003-a725-147719818663</Url>
              <svg width="23" height="23" viewBox="0 0 24 24"><path d="M12 2.500l2.700 6.600 7.100.6-5.400 4.600 1.700 6.900L12 17.500 5.900 21.200l1.700-6.900L2.200 9.700l7.100-.6z" {...dark} stroke="#5f6368" strokeWidth={2} /></svg>
            </Omnibox>
            <NavButton $w={74} $ml={4} $center>
              <svg width="28" height="28" viewBox="0 0 28 28"><path d="M4 5.500h16.500a1.500 1.500 0 0 1 1.500 1.500v16.500a1.500 1.500 0 0 1-1.500 1.500H4a1.500 1.500 0 0 1-1.500-1.500V20c5-1 5-8 0-9.500V7A1.500 1.500 0 0 1 4 5.500z" {...dark} strokeWidth={2.5} strokeLinejoin="round" /><path d="M9 5a3.200 3.200 0 0 1 6.400 0zM22.500 11.800a3.200 3.200 0 0 1 0 6.400z" fill="#26221d" /></svg>
            </NavButton>
            <BarSlot><OrangeBar /></BarSlot>
            <NavButton $w={78} $center><svg width="26" height="26" viewBox="0 0 26 26"><path d="M13 1v15.500M5.500 9.500L13 17l7.500-7.500M2.300 18v4a1.700 1.700 0 0 0 1.700 1.700h18a1.700 1.700 0 0 0 1.700-1.700v-4" {...dark} strokeWidth={2.8} /></svg></NavButton>
            <BarSlot><Avatar $size={30} $font={15}>S</Avatar></BarSlot>
            <NavButton $w={54} $ml={12} $center><svg width="6" height="22" viewBox="0 0 6 22" fill="#26221d"><circle cx="3" cy="3" r="2.300" /><circle cx="3" cy="11" r="2.300" /><circle cx="3" cy="19" r="2.300" /></svg></NavButton>
          </Toolbar>
          <BookmarkBar>
            <Bookmark $w={44}><AppsIcon /></Bookmark>
            <OrangeBar />
            <BookmarkGroup>
              {bookmarks.map((b, i) => <Bookmark key={i} $w={b.w} $gap={b.gap}>{b.icon}<label>{b.label}</label></Bookmark>)}
            </BookmarkGroup>
            <OrangeBar />
            <BookmarkGroup $right><Bookmark $w={149} $gap={12}><FolderIcon /><label>All Bookmarks</label></Bookmark></BookmarkGroup>
          </BookmarkBar>
        </ChromeInner>
      </Chrome>

      <Page>
        <Sidebar>
          <SidebarTop><PanelIcon /><LensIcon /><ComposeIcon /></SidebarTop>
          <SidebarScroll>
            <SidebarList>
              <SideRow>
                <SideIcon $ring><svg width="24" height="24" viewBox="0 0 24 24"><path d={OPENAI} fill="#0d0d0d" /></svg></SideIcon>
                <SideText>ChatGPT</SideText>
              </SideRow>
              <SideRow>
                <SideIcon><svg width="24" height="24" viewBox="0 0 24 24" {...grey}><circle cx="6.300" cy="6" r="3.700" /><circle cx="18.500" cy="6" r="3.700" /><circle cx="6.300" cy="18.200" r="3.700" /><circle cx="18.500" cy="18.200" r="3.700" /></svg></SideIcon>
                <SideText>Explore GPTs</SideText>
              </SideRow>
              <GroupLabel>Today</GroupLabel>
              <SideRow $active>
                <SideText>Form submission help</SideText>
                <svg width="22" height="6" viewBox="0 0 22 6" fill="#5d5d5d"><circle cx="3" cy="3" r="2.400" /><circle cx="11" cy="3" r="2.400" /><circle cx="19" cy="3" r="2.400" /></svg>
              </SideRow>
              <SideRow><SideText>Hackathon Progress Check</SideText></SideRow>
              <SideRow><SideText $fade>Marketplace Staging Deploym</SideText></SideRow>
              <GroupLabel>Yesterday</GroupLabel>
              <SideRow><SideText>FindByIdAndUpdate Error Fix</SideText></SideRow>
              <GroupLabel>Previous 7 Days</GroupLabel>
              <SideRow><SideText>MongoDB Namespace Error</SideText></SideRow>
            </SidebarList>
            <ScrollTrack $w={21}><Arrow $top={10} /><Thumb $h={186} $top={9} /><Arrow $down $top={408} /></ScrollTrack>
          </SidebarScroll>
          <Upgrade>
            <UpgradeIcon><UpgradeLogo /></UpgradeIcon>
            <UpgradeText>Upgrade plan<small>More access to the best models</small></UpgradeText>
          </Upgrade>
        </Sidebar>

        <Main>
          <MainHeader>
            <ModelName>ChatGPT<svg width="17" height="12" viewBox="0 0 17 12"><path d="M1.500 1.500l7 8.500 7-8.500" fill="none" stroke="#b0b0b0" strokeWidth="2" strokeLinecap="round" strokeLinejoin="round" /></svg></ModelName>
            <ShareButton>
              <svg width="20" height="20" viewBox="0 0 20 20" fill="none" stroke="#0d0d0d" strokeWidth="2" strokeLinecap="round" strokeLinejoin="round"><path d="M10 13V2M5.500 6L10 1.500 14.500 6M1.500 12v4A2.500 2.500 0 0 0 4 18.500h12a2.500 2.500 0 0 0 2.500-2.500v-4" /></svg>
              <span>Share</span>
            </ShareButton>
            <Avatar $size={48} $font={27}>S</Avatar>
          </MainHeader>
          <TableArea>
            <Table>
              <colgroup>{columns.map((w, i) => <Col key={i} $w={w} />)}</colgroup>
              <thead><tr>{headers.map(h => <th key={h}>{h}</th>)}</tr></thead>
              <tbody>
                {rows.map(r => (
                  <tr key={r[0]}>
                    {r.map((cell, i) => <td key={i}>{i === 5 && <CheckEmoji><CheckMark /></CheckEmoji>}{withArrow(cell)}</td>)}
                  </tr>
                ))}
              </tbody>
            </Table>
            <ScrollDown><svg width="20" height="22" viewBox="0 0 20 22" fill="none" stroke="#0d0d0d" strokeWidth="2.200" strokeLinecap="round" strokeLinejoin="round"><path d="M10 1.500v18.500M2 12.500l8 8 8-8" /></svg></ScrollDown>
          </TableArea>
          <Composer>
            <Placeholder>Message ChatGPT</Placeholder>
            <ComposerRow>
              <Pill $w={54}><svg width="22" height="22" viewBox="0 0 22 22" {...grey} strokeWidth={2.2}><path d="M11 1.500v19M1.500 11h19" /></svg></Pill>
              <Pill $w={124}>
                <svg width="24" height="24" viewBox="0 0 24 24" {...grey} strokeWidth={2}><circle cx="12" cy="12" r="10.500" /><ellipse cx="12" cy="12" rx="4.800" ry="10.500" /><path d="M1.500 12h21" /></svg>
                <span>Search</span>
              </Pill>
              <Pill $w={128}>
                <svg width="22" height="26" viewBox="0 0 22 26" {...grey} strokeWidth={2.1}><path d="M7 18.500c0-2-4.500-3.500-4.500-9a8.500 8.500 0 0 1 17 0c0 5.500-4.500 7-4.500 9zM7 18.500h8v3a3 3 0 0 1-3 3h-2a3 3 0 0 1-3-3z" /><path d="M8 21.500h6v1a2 2 0 0 1-2 2h-2a2 2 0 0 1-2-2z" fill="#5d5d5d" stroke="none" /></svg>
                <span>Reason</span>
              </Pill>
              <VoiceButton><svg width="28" height="26" viewBox="0 0 28 26" stroke="#fff" strokeWidth="4" strokeLinecap="round"><path d="M2.500 10.500v5M10 3v20M17.800 6.500v13M25.500 10.500v5" /></svg></VoiceButton>
            </ComposerRow>
          </Composer>
          <Disclaimer>ChatGPT can make mistakes. Check important info.</Disclaimer>
        </Main>
        <ScrollTrack $w={22}><Arrow $top={10} /><Thumb $h={25} $top={506} /><Arrow $down $top={40} /></ScrollTrack>
      </Page>

      <Taskbar>
        <Weather><WeatherIcon /><div>72°F<small>Mostly cloudy</small></div></Weather>
        <WindowsIcon />
        <SearchBox>
          <svg width="23" height="23" viewBox="0 0 23 23" fill="none" stroke="#1f1f1f" strokeWidth="2.400"><circle cx="10" cy="10" r="8.300" /><path d="M16 16l6 6" strokeWidth="3" /></svg>
          <span>Search</span>
          <ShoppingArt />
        </SearchBox>
        <AppSlot><TaskViewIcon /></AppSlot>
        <AppSlot><CopilotIcon /></AppSlot>
        <AppSlot><TeamsIcon /></AppSlot>
        <AppSlot><ExplorerIcon /></AppSlot>
        <AppSlot><EdgeIcon /></AppSlot>
        <AppSlot><StoreIcon /></AppSlot>
        <AppSlot $active><ChromeIcon /><Indicator $wide /></AppSlot>
        <AppSlot><PhotosIcon /><Indicator /></AppSlot>
        <AppSlot><VscodeIcon /><Indicator /></AppSlot>
        <Tray>
          <TraySlot $w={48}><svg width="16" height="10" viewBox="0 0 16 10" {...tray} strokeWidth={2}><path d="M1 9l7-7.500L15 9" /></svg></TraySlot>
          <TraySlot $w={48}><svg width="26" height="20" viewBox="0 0 26 20" {...tray} strokeWidth={1.5}><path d="M6.500 17a5 5 0 0 1-.8-9.900A7 7 0 0 1 18.800 6.500a5.300 5.300 0 0 1 .7 10.500z" fill="#a5a5a5" /><path d="M2 14c3-3 9-3.500 12 3H6.500A5 5 0 0 1 2 14z" fill="#e8e8e8" stroke="none" /><path d="M4.500 1l18.500 18" /></svg></TraySlot>
          <TraySlot $w={36} $ml={6}><svg width="26" height="26" viewBox="0 0 26 26" {...tray}><path d="M12 23.500A11 11 0 1 1 23.800 11" /><path d="M11 23.500C6.500 18 6.500 7 12.500 1.500c2.500 2.500 4 5.500 4.400 8.500M2 8.500h21M2 17h9" /><circle cx="18.500" cy="18.500" r="6" /><path d="M14.300 22.700l8.400-8.400" /></svg></TraySlot>
          <TraySlot $w={36}><svg width="26" height="22" viewBox="0 0 26 22" {...tray}><path d="M1.500 8v6h4l5.500 5V3L5.500 8zM14 8.500c1 1.500 1 3.500 0 5M17.500 5.500c3 3 3 8 0 11M20.500 2c5 5 5 13 0 18" /></svg></TraySlot>
          <TraySlot $w={36}><svg width="26" height="22" viewBox="0 0 26 22" {...tray}><path d="M13 5.500h7.500a1.500 1.500 0 0 1 1.500 1.500v9.500a1.500 1.500 0 0 1-1.500 1.500H4.500M6.500 15.200h4.500" /><path d="M22.500 10v4h2v-4z" fill="#1b1b1b" /><path d="M9.500 0C5 2.500 1.500 5 1.500 9c0 2.500 1 4 2.500 5l-2 3 2 .8 2-3.500c4-.3 6.500-5 3.500-14.300z" fill="#1b1b1b" stroke="none" /></svg></TraySlot>
          <Clock>11:40 PM<br />2/7/2025</Clock>
        </Tray>
      </Taskbar>

      <HoverCard>
        <CardTop><CardTitle>Form submission help</CardTitle>chatgpt.com</CardTop>
        <CardBottom><GaugeIcon />Memory usage: 143 MB</CardBottom>
      </HoverCard>
      <Help>?</Help>
    </Screen>
  );
}
